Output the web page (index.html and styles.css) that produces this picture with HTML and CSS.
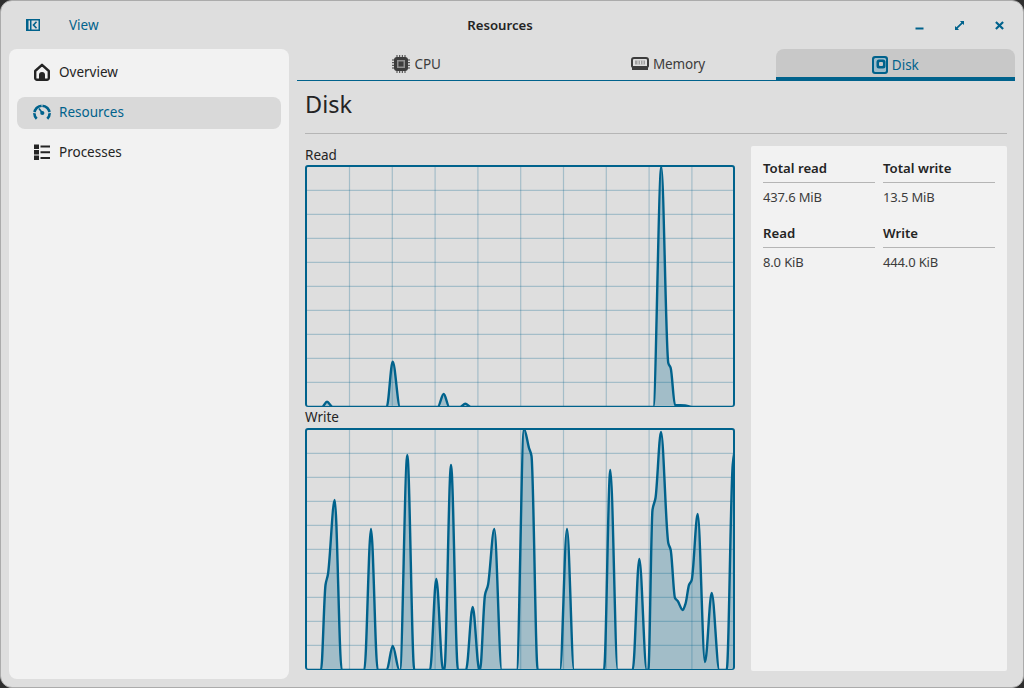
FILE: index.html
```html
<!DOCTYPE html>
<html lang="en">

<head>
    <meta charset="UTF-8">
    <title>Resources</title>
    <link rel="stylesheet" href="styles.css">
</head>

<body>
    <div class="window">
        <header class="titlebar">
            <div class="titlebar-left">
                <svg class="toggle-icon" width="14" height="12" viewBox="0 0 14 12">
                    <path fill="currentColor" fill-rule="evenodd" d="M0 0h14v12H0zM2.500 1.500v9h1.500v-9zM5.500 1.500v9h7v-9z" />
                    <path fill="none" stroke="currentColor" stroke-width="1.600" d="M10.500 2.800 7.500 6l3 3.200" />
                </svg>
                <span class="view-button">View</span>
            </div>
            <div class="window-title">Resources</div>
            <div class="window-controls">
                <svg width="9" height="9" viewBox="0 0 9 9">
                    <rect x="0.500" y="6.500" width="8" height="2" fill="currentColor" />
                </svg>
                <svg width="9" height="9" viewBox="0 0 10 10">
                    <path fill="currentColor" d="M5.500 0H10v4.500L8.400 3 2.900 8.400 4.500 10H0V5.500L1.600 7 7 1.600z" />
                </svg>
                <svg width="9" height="9" viewBox="0 0 10 10">
                    <path fill="none" stroke="currentColor" stroke-width="2.400" d="M1 1l8 8M9 1 1 9" />
                </svg>
            </div>
        </header>

        <div class="main">
            <nav class="sidebar">
                <div class="nav-item">
                    <svg width="18" height="18" viewBox="0 0 18 18">
                        <path fill="none" stroke="currentColor" stroke-width="2.400" stroke-linejoin="round"
                            d="M2.200 8 9 1.800 15.800 8v7a1.800 1.800 0 0 1-1.800 1.800H4A1.800 1.800 0 0 1 2.200 15z" />
                        <path fill="currentColor" d="M6 17v-5a3 3 0 0 1 6 0v5z" />
                    </svg>
                    <span>Overview</span>
                </div>
                <div class="nav-item active">
                    <svg width="18" height="18" viewBox="0 0 18 18">
                        <path fill="none" stroke="currentColor" stroke-width="2.600"
                            d="M3.700 15.800a7.600 7.600 0 1 1 10.600 0" />
                        <path fill="none" stroke="#d9d9d9" stroke-width="1" d="M0 9.500l3.500.4M9 0v3.500M18 9.500l-3.500.4" />
                        <path fill="none" stroke="currentColor" stroke-width="1.500" d="M6 5.500 9 9.500" />
                        <circle cx="9.300" cy="10" r="2.100" fill="currentColor" />
                    </svg>
                    <span>Resources</span>
                </div>
                <div class="nav-item">
                    <svg width="18" height="18" viewBox="0 0 18 18">
                        <path fill="currentColor"
                            d="M1 1.500h5v4.500H1zM1 7h5v4.500H1zM1 12.500h5V17H1zM7.500 2.500H17v2H7.500zM7.500 8.200H17v2H7.500zM7.500 14H17v2H7.500z" />
                    </svg>
                    <span>Processes</span>
                </div>
            </nav>

            <div class="content">
                <div class="tabs">
                    <div class="tab">
                        <svg width="18" height="18" viewBox="0 0 18 18">
                            <path fill="none" stroke="currentColor" stroke-width="1"
                                d="M5 0v3M7.700 0v3M10.300 0v3M13 0v3M5 15v3M7.700 15v3M10.300 15v3M13 15v3M0 5h3M0 7.700h3M0 10.300h3M0 13h3M15 5h3M15 7.700h3M15 10.300h3M15 13h3" />
                            <rect x="2" y="2" width="14" height="14" rx="3" fill="currentColor" />
                            <rect x="5" y="5" width="8" height="8" fill="#8f8f8f" />
                            <rect x="6.500" y="6.500" width="5" height="5" fill="currentColor" />
                        </svg>
                        <span>CPU</span>
                    </div>
                    <div class="tab tab-memory">
                        <svg width="18" height="14" viewBox="0 0 18 14">
                            <path fill="currentColor" fill-rule="evenodd"
                                d="M3 0h12a3 3 0 0 1 3 3v6a2 2 0 0 1-1 1.700V13H1v-2.300A2 2 0 0 1 0 9V3a3 3 0 0 1 3-3zM3 2a1 1 0 0 0-1 1v6h14V3a1 1 0 0 0-1-1z" />
                            <path fill="#a0a0a0" d="M4 3.500h10v4H4z" />
                            <path fill="#dedede" d="M6.500 3.500h1v4h-1zM9 3.500h1v4H9zM11.500 3.500h1v4h-1z" />
                        </svg>
                        <span>Memory</span>
                    </div>
                    <div class="tab active">
                        <svg width="16" height="18" viewBox="0 0 16 18">
                            <rect width="16" height="18" rx="3" fill="currentColor" />
                            <rect x="2" y="2" width="12" height="14" rx="1.500" fill="#9dbccb" />
                            <rect x="4.500" y="3.500" width="9" height="9" rx="2.500" fill="currentColor" />
                            <rect x="7" y="6" width="4" height="4" rx="1" fill="#c8c8c8" />
                        </svg>
                        <span>Disk</span>
                    </div>
                </div>

                <div class="page">
                    <h1>Disk</h1>
                    <hr class="separator">
                    <div class="page-body">
                        <div class="graphs">
                            <div class="graph-label">Read</div>
                            <div class="graph" id="readGraph"></div>
                            <div class="graph-label">Write</div>
                            <div class="graph" id="writeGraph"></div>
                        </div>
                        <div class="stats">
                            <div class="stat">
                                <div class="stat-name">Total read</div>
                                <div class="stat-value">437.6 MiB</div>
                            </div>
                            <div class="stat">
                                <div class="stat-name">Total write</div>
                                <div class="stat-value">13.5 MiB</div>
                            </div>
                            <div class="stat">
                                <div class="stat-name">Read</div>
                                <div class="stat-value">8.0 KiB</div>
                            </div>
                            <div class="stat">
                                <div class="stat-name">Write</div>
                                <div class="stat-value">444.0 KiB</div>
                            </div>
                        </div>
                    </div>
                </div>
            </div>
        </div>
    </div>

    <script src="chart.js"></script>
</body>

</html>
```

FILE: styles.css
```css
body {
    margin: 0;
    height: 688px;
    overflow: hidden;
    background: #2e2e2e;
    font-family: "Noto Sans", sans-serif;
    font-size: 13.5px;
    color: #242424;
}

.window {
    box-sizing: border-box;
    height: 688px;
    display: flex;
    flex-direction: column;
    background: #dedede;
    border: 1px solid #ababab;
    border-radius: 12px;
    overflow: hidden;
}

.titlebar {
    height: 48px;
    flex: none;
    display: flex;
    align-items: center;
    padding: 0 19px 0 25px;
    color: #00628c;
}

.titlebar-left {
    display: flex;
    align-items: center;
    gap: 29px;
    width: 441px;
}

.window-title {
    width: 66px;
    text-align: center;
    font-weight: 600;
    font-size: 13.2px;
    white-space: nowrap;
    color: #242424;
}

.window-controls {
    margin-left: auto;
    display: flex;
    gap: 31px;
    align-items: center;
}

.main {
    flex: 1;
    display: flex;
    min-height: 0;
    padding: 0 8px 8px;
    gap: 8px;
}

.sidebar {
    width: 264px;
    flex: none;
    background: #f2f2f2;
    border-radius: 8px;
    padding: 8px;
    display: flex;
    flex-direction: column;
    gap: 8px;
}

.nav-item {
    box-sizing: border-box;
    height: 32px;
    display: flex;
    align-items: center;
    gap: 8px;
    padding: 0 16px 2px;
    border-radius: 8px;
}

.nav-item.active {
    background: #d9d9d9;
    color: #00628c;
}

.content {
    flex: 1;
    min-width: 0;
    display: flex;
    flex-direction: column;
}

.tabs {
    height: 32px;
    flex: none;
    display: grid;
    grid-template-columns: repeat(3, 1fr);
    border-bottom: 1px solid #00628c;
    box-sizing: border-box;
}

.tab {
    min-width: 0;
    box-sizing: border-box;
    display: flex;
    align-items: center;
    justify-content: center;
    gap: 4px;
    color: #3c3c3c;
    margin-bottom: 1px;
}

.tab-memory {
    padding-left: 24px;
    letter-spacing: -0.2px;
}

.tab.active {
    color: #00628c;
    background: #c8c8c8;
    border-radius: 8px 8px 0 0;
    border-bottom: 4px solid #00628c;
    padding-top: 3px;
    margin-bottom: -1px;
}

.page {
    flex: 1;
    min-height: 0;
    display: flex;
    flex-direction: column;
    padding: 7px 8px 0;
}

h1 {
    margin: 0;
    font-size: 23.5px;
    font-weight: 400;
    line-height: 32px;
}

.separator {
    margin: 13px 0 12px;
    border: 0;
    border-top: 1px solid #b5b5b5;
}

.page-body {
    flex: 1;
    display: flex;
    gap: 16px;
    min-height: 0;
}

.graphs {
    width: 430px;
    flex: none;
}

.graph-label {
    height: 19px;
    line-height: 16px;
}

.graph-label:first-child {
    line-height: 18px;
}

.graph {
    box-sizing: border-box;
    height: 242px;
    border: 2px solid #00628c;
    border-bottom-width: 1px;
    border-radius: 3px;
    margin-bottom: 2px;
}

.graph svg {
    display: block;
    overflow: hidden;
}

.grid-line {
    stroke: #00628c;
    stroke-opacity: 0.26;
    stroke-width: 1.2;
}

.graph-fill {
    fill: #00628c;
    fill-opacity: 0.27;
}

.graph-line {
    fill: none;
    stroke: #00628c;
    stroke-width: 2.4;
}

.stats {
    width: 256px;
    flex: none;
    box-sizing: border-box;
    height: 525px;
    background: #f2f2f2;
    border-radius: 2px;
    padding: 12px;
    display: grid;
    grid-template-columns: 112px 112px;
    grid-auto-rows: 65px;
    column-gap: 8px;
}

.stat-name {
    font-weight: 600;
    font-size: 13.2px;
    height: 24px;
    border-bottom: 1px solid #b5b5b5;
    line-height: 20px;
}

.stat-value {
    margin-top: 4px;
    line-height: 20px;
    font-size: 13px;
    letter-spacing: -0.15px;
    color: #3c3c3c;
}
```

FILE: chart.js
```js
// points are [x, y] inside the graph box, base line is y = 240 (just under the visible area)
const readPoints = [[0, 240], [15, 240], [20, 234.7], [25.7, 240], [79.7, 240], [85.7, 194.7], [93, 240],
    [130.7, 240], [136.7, 227], [142.3, 240], [153, 240], [158.3, 236.7], [164, 240], [346.3, 240],
    [354.3, -0.3], [361.3, 196], [363.7, 201], [368, 238], [378, 238.5], [385, 240], [426, 240]];

const writePoints = [[0, 240], [14, 240], [18.5, 155], [21, 144], [27.7, 70], [34.7, 240], [57.3, 240], [64, 99],
    [70.7, 240], [79.7, 240], [85.7, 216], [92.3, 240], [93, 240], [100.3, 25], [107.3, 240], [123, 240],
    [129.3, 149], [136, 240], [137.3, 240], [144, 35], [151, 240], [159, 240], [165.7, 177], [172.3, 240],
    [173, 240], [178, 165], [181, 155], [187.3, 99], [194.7, 240], [209.7, 240], [217, -1], [222, 18], [224.5, 26],
    [230.7, 240], [253, 240], [260, 99], [267, 240], [297, 240], [303.3, 40], [310.7, 240], [325.7, 240],
    [332.3, 129], [339.7, 240], [341.3, 240], [345.5, 80], [348.5, 68], [354, 2], [361.3, 113], [363.7, 120],
    [368, 168], [370.7, 171], [375.7, 180], [378.7, 173], [382, 155], [384.7, 150], [390.7, 84], [398, 232],
    [404.7, 163], [412.3, 240], [419.7, 240], [425.7, 35], [428, 20]];

function tangents(pts) {
    const slopes = [];
    for (let i = 0; i < pts.length - 1; i++) {
        slopes.push((pts[i + 1][1] - pts[i][1]) / (pts[i + 1][0] - pts[i][0]));
    }
    const t = [0];
    for (let i = 1; i < pts.length - 1; i++) {
        const a = slopes[i - 1], b = slopes[i];
        t.push(a * b <= 0 ? 0 : 2 * a * b / (a + b));
    }
    t.push(0);
    return t;
}

function linePath(pts) {
    const t = tangents(pts);
    let d = `M${pts[0][0]} ${pts[0][1]}`;
    for (let i = 0; i < pts.length - 1; i++) {
        const h = (pts[i + 1][0] - pts[i][0]) / 3;
        d += `C${pts[i][0] + h} ${pts[i][1] + t[i] * h} ${pts[i + 1][0] - h} ${pts[i + 1][1] - t[i + 1] * h} ${pts[i + 1][0]} ${pts[i + 1][1]}`;
    }
    return d;
}

function drawGraph(id, pts) {
    let lines = '';
    for (let i = 1; i < 10; i++) {
        const x = 42.8 * i - 0.3, y = 23.4 + 24 * (i - 1);
        lines += `<line class="grid-line" x1="${x}" y1="0" x2="${x}" y2="239" />`;
        lines += `<line class="grid-line" x1="0" y1="${y}" x2="426" y2="${y}" />`;
    }
    const d = linePath(pts);
    document.getElementById(id).innerHTML =
        `<svg width="426" height="239" viewBox="0 0 426 239">${lines}` +
        `<path class="graph-fill" d="${d}V240H0Z" /><path class="graph-line" d="${d}" /></svg>`;
}

drawGraph('readGraph', readPoints);
drawGraph('writeGraph', writePoints);
```
